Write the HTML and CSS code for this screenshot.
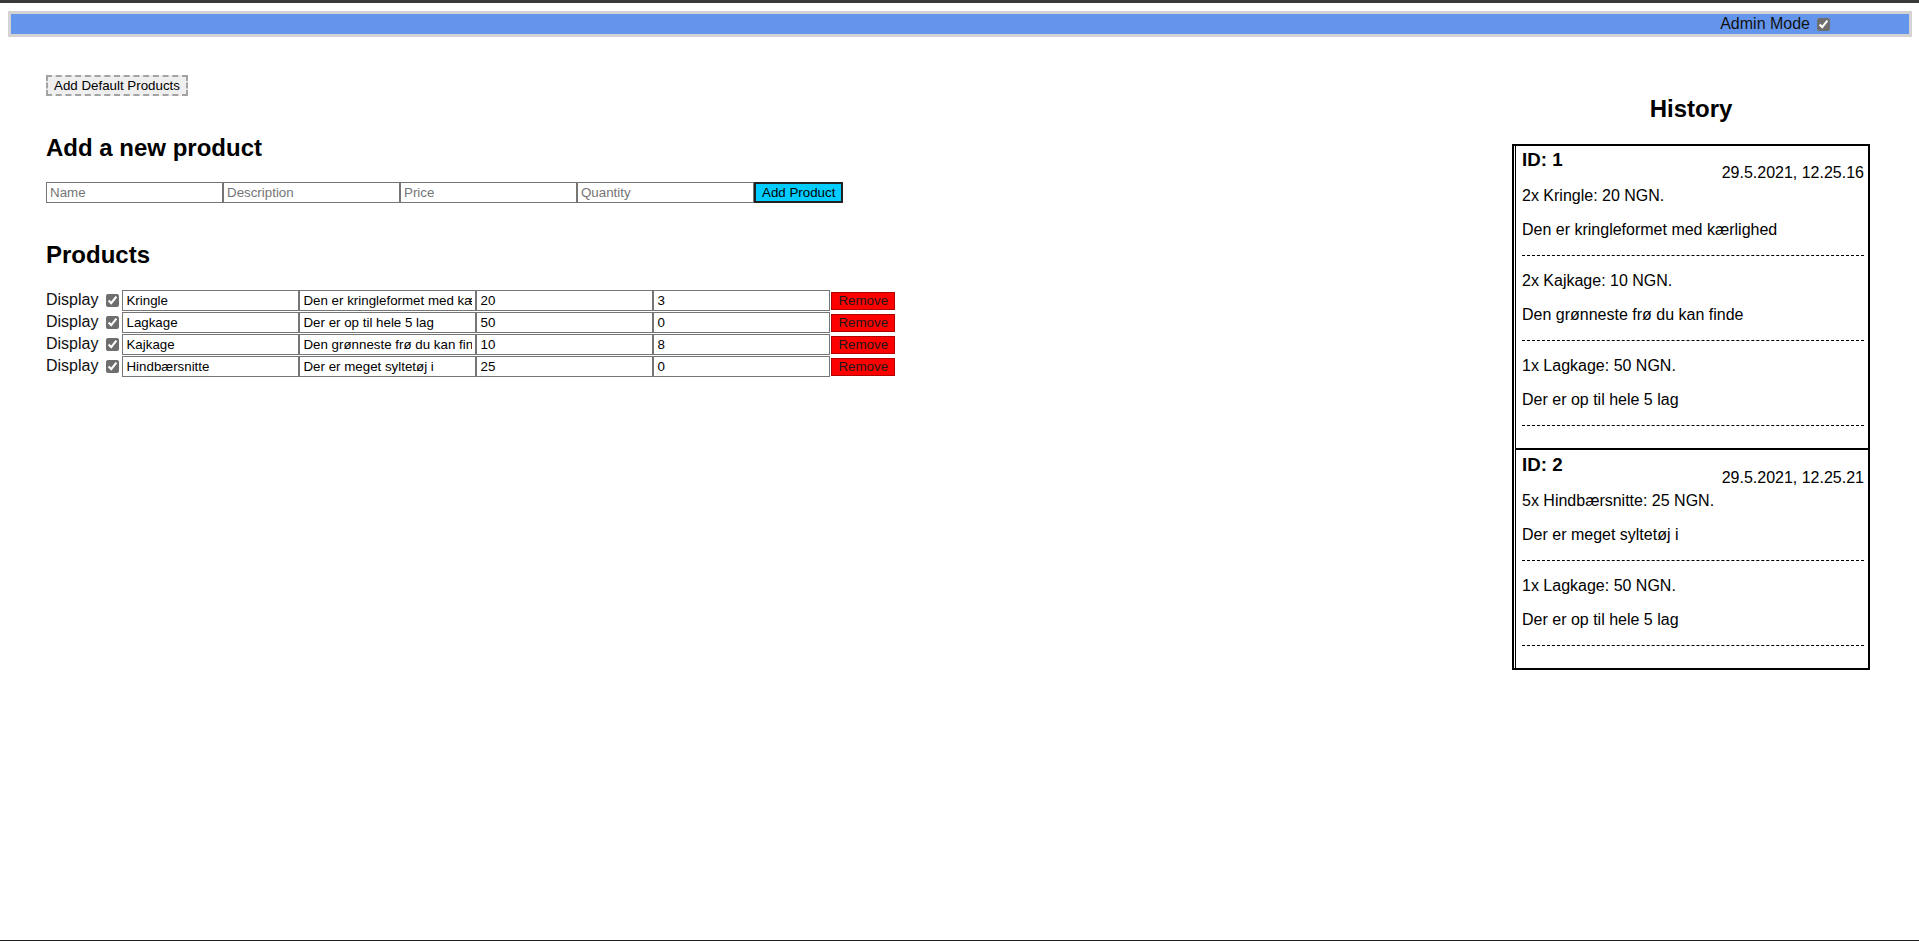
FILE: index.html
```html
<!DOCTYPE html>
<html lang="da">
<head>
<meta charset="utf-8">
<title>Bakery Admin</title>
<link rel="stylesheet" href="styles.css">
</head>
<body>
<div class="chrome-top"></div>
<div class="page">
  <nav class="navbar">
    <label class="admin">Admin Mode<input type="checkbox" class="check admin-check" checked></label>
  </nav>
  <main class="main">
    <section class="left">
      <button class="btn-default" type="button">Add Default Products</button>
      <h2 class="heading">Add a new product</h2>
      <form class="add-form">
        <input class="field" type="text" placeholder="Name"><input class="field" type="text" placeholder="Description"><input class="field" type="text" placeholder="Price"><input class="field" type="text" placeholder="Quantity"><button class="btn-add" type="button">Add Product</button>
      </form>
      <h2 class="heading products-heading">Products</h2>
      <div class="product-list">
        <div class="row">
          <span class="display">Display</span><input type="checkbox" class="check row-check" checked><input class="field" type="text" value="Kringle"><input class="field" type="text" value="Den er kringleformet med kærlighed"><input class="field" type="text" value="20"><input class="field" type="text" value="3"><button class="btn-remove" type="button">Remove</button>
        </div>
        <div class="row">
          <span class="display">Display</span><input type="checkbox" class="check row-check" checked><input class="field" type="text" value="Lagkage"><input class="field" type="text" value="Der er op til hele 5 lag"><input class="field" type="text" value="50"><input class="field" type="text" value="0"><button class="btn-remove" type="button">Remove</button>
        </div>
        <div class="row">
          <span class="display">Display</span><input type="checkbox" class="check row-check" checked><input class="field" type="text" value="Kajkage"><input class="field" type="text" value="Den grønneste frø du kan finde"><input class="field" type="text" value="10"><input class="field" type="text" value="8"><button class="btn-remove" type="button">Remove</button>
        </div>
        <div class="row">
          <span class="display">Display</span><input type="checkbox" class="check row-check" checked><input class="field" type="text" value="Hindbærsnitte"><input class="field" type="text" value="Der er meget syltetøj i"><input class="field" type="text" value="25"><input class="field" type="text" value="0"><button class="btn-remove" type="button">Remove</button>
        </div>
      </div>
    </section>
    <aside class="history-col">
      <h2 class="history-title">History</h2>
      <div class="history">
        <div class="entry">
          <div class="entry-head">
            <h3 class="entry-id">ID: 1</h3>
            <div class="entry-date">29.5.2021, 12.25.16</div>
          </div>
          <div class="item first-item">
            <p class="line">2x Kringle: 20 NGN.</p>
            <p class="line">Den er kringleformet med kærlighed</p>
          </div>
          <div class="item">
            <p class="line">2x Kajkage: 10 NGN.</p>
            <p class="line">Den grønneste frø du kan finde</p>
          </div>
          <div class="item">
            <p class="line">1x Lagkage: 50 NGN.</p>
            <p class="line">Der er op til hele 5 lag</p>
          </div>
        </div>
        <div class="entry">
          <div class="entry-head">
            <h3 class="entry-id">ID: 2</h3>
            <div class="entry-date">29.5.2021, 12.25.21</div>
          </div>
          <div class="item first-item">
            <p class="line">5x Hindbærsnitte: 25 NGN.</p>
            <p class="line">Der er meget syltetøj i</p>
          </div>
          <div class="item">
            <p class="line">1x Lagkage: 50 NGN.</p>
            <p class="line">Der er op til hele 5 lag</p>
          </div>
        </div>
      </div>
    </aside>
  </main>
</div>
<div class="chrome-bottom"></div>
</body>
</html>
```

FILE: styles.css
```css
html, body {
  margin: 0;
  padding: 0;
  background: #ffffff;
  overflow: hidden;
}

body {
  font-family: "Liberation Sans", Arial, sans-serif;
  font-size: 16px;
  color: #000;
}

.chrome-top {
  height: 3px;
  background: #3a3a3a;
}

.chrome-bottom {
  position: fixed;
  left: 0;
  right: 0;
  bottom: 0;
  height: 1px;
  background: #1e1e1e;
}

.page {
  padding: 8px 7px 8px 8px;
}

.navbar {
  display: flex;
  justify-content: flex-end;
  align-items: center;
  height: 20px;
  border: 3px solid #d3d3d3;
  background: #6495ed;
  padding-right: 79px;
}

.admin {
  display: flex;
  align-items: center;
  line-height: 18.4px;
  color: #111;
}

.check {
  width: 13px;
  height: 13px;
  margin: 0;
  accent-color: #6e6e6e;
}

.admin-check {
  margin-left: 7px;
}

.main {
  display: flex;
  justify-content: space-between;
  align-items: flex-start;
  padding: 38px 42px 0 38px;
}

.left {
  display: flex;
  flex-direction: column;
  align-items: flex-start;
}

.btn-default {
  font-family: "Liberation Sans", Arial, sans-serif;
  font-size: 13.333px;
  height: 21px;
  padding: 1px 6px;
  border: 2px dashed #a3a3a3;
  background: #efefef;
  color: #000;
  line-height: 15px;
}

.heading {
  font-size: 24px;
  font-weight: bold;
  line-height: 27.6px;
  margin: 38px 0 20px;
}

.products-heading {
  margin-bottom: 22px;
}

.add-form {
  display: flex;
  margin: 0;
}

.field {
  box-sizing: border-box;
  width: 177px;
  height: 21px;
  margin: 0;
  padding: 2px 3px;
  border: 1px solid #767676;
  font-family: "Liberation Sans", Arial, sans-serif;
  font-size: 13.333px;
  color: #000;
  background: #fff;
}

.field::placeholder {
  color: #757575;
}

.btn-add {
  box-sizing: border-box;
  height: 21px;
  padding: 1px 6px;
  border: 2px solid #222;
  background: #00ccff;
  color: #000;
  font-family: "Liberation Sans", Arial, sans-serif;
  font-size: 13.333px;
  line-height: 15px;
}

.product-list {
  display: flex;
  flex-direction: column;
}

.row {
  display: flex;
  align-items: flex-start;
  height: 22px;
}

.display {
  line-height: 18.4px;
  margin-top: 1px;
  color: #111;
}

.row-check {
  margin: 4px 3px 0 8px;
}

.btn-remove {
  align-self: center;
  box-sizing: border-box;
  height: 18px;
  margin: 0 0 1px 1px;
  padding: 0 6px;
  border: 1px solid #b30000;
  background: #ff0000;
  color: #1a1a1a;
  font-family: "Liberation Sans", Arial, sans-serif;
  font-size: 13.333px;
  line-height: 15px;
}

.history-col {
  width: 358px;
  display: flex;
  flex-direction: column;
}

.history-title {
  text-align: center;
  font-size: 24px;
  line-height: 27.6px;
  margin: 20px 0 21px;
}

.history {
  border: 2px solid #000;
}

.entry {
  margin-left: 1px;
  border-left: 1px solid #000;
  padding: 3px 4px 22px 6px;
}

.entry + .entry {
  border-top: 2px solid #000;
  padding-top: 4px;
}

.entry-head {
  display: flex;
  justify-content: space-between;
  align-items: flex-start;
}

.entry-id {
  margin: 0;
  font-size: 18.72px;
  line-height: 21.5px;
}

.entry-date {
  margin-top: 15px;
  line-height: 18.4px;
}

.item {
  border-bottom: 1px dashed #000;
}

.line {
  margin: 16px 0;
  line-height: 18px;
}

.first-item .line:first-child {
  margin-top: 5px;
}
```
